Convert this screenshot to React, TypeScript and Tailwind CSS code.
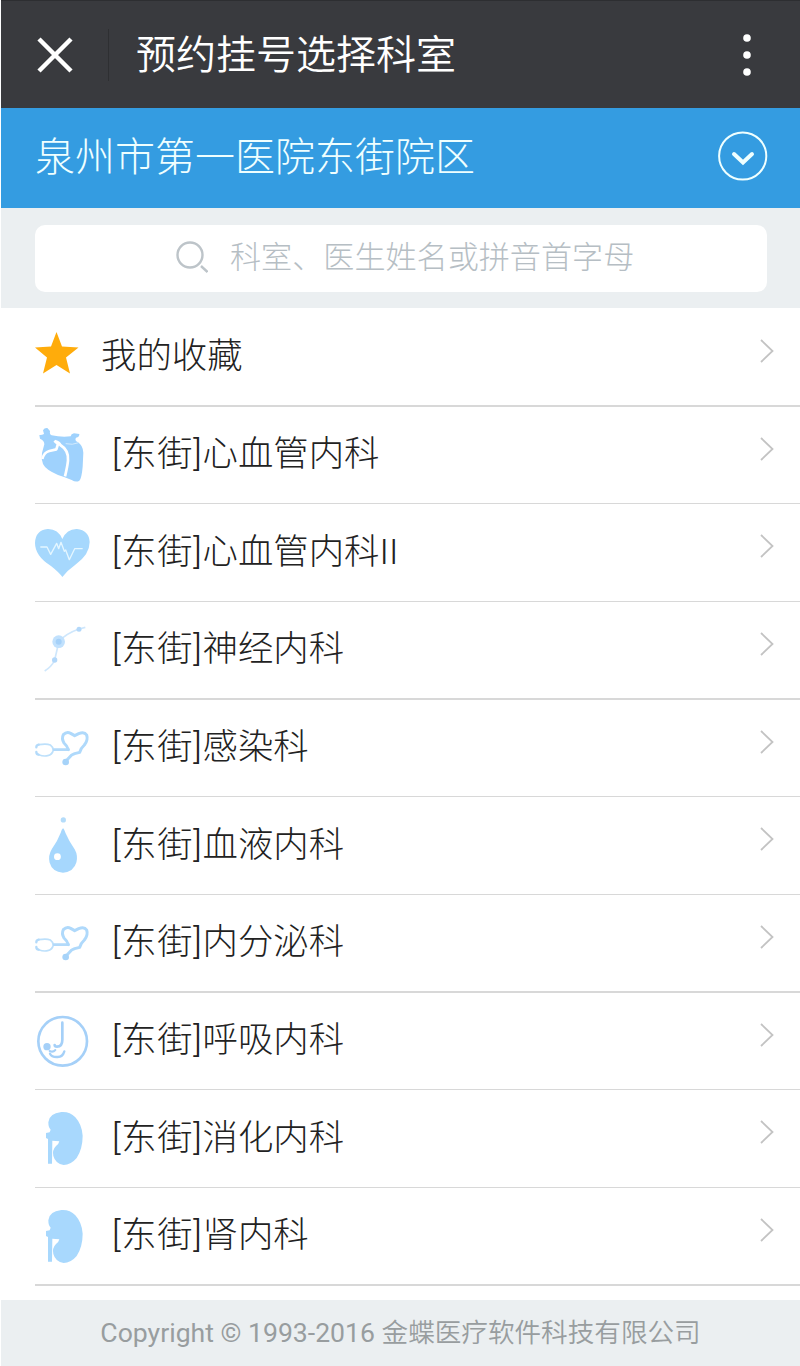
import React from "react";

function CardiacIcon() {
    return (
        <svg className="h-14 w-14" viewBox="30 36 168 168" fill="none">
            <path
                d="M43 60Q50 61 57 57L54 46Q58 38 67 39L75 48Q73 58 80 61Q108 67 137 64Q138 57 147 55L163 57Q164 66 153 68Q148 76 158 81Q174 91 175 113L173 155Q170 190 163 197Q153 203 140 195Q122 187 99 180Q62 164 54 147Q48 132 51 114L58 88Q58 76 45 71Z"
                fill="#9fd2fd"
            />
            <path
                d="M52 132Q57 112 73 108L94 103L99 87L88 77M91 79Q103 82 106 90Q132 106 129 137Q127 156 120 184"
                stroke="#fff"
                strokeWidth="8"
                strokeLinejoin="round"
            />
            <path d="M122 86Q142 91 161 83" stroke="#d3ebfe" strokeWidth="3" />
        </svg>
    );
}

function HeartRateIcon() {
    return (
        <svg className="h-14 w-14" viewBox="30 29 168 168" fill="none">
            <path
                d="M112 188Q102 174 78 155Q30 125 30 86Q31 48 68 44Q99 43 112 74Q126 43 156 44Q192 48 194 83Q194 121 151 151Q127 168 112 188Z"
                fill="#a6d8fd"
            />
            <path
                d="M46 98H66L77 120L95 87L101 103L108 84L118 111L122 107L133 136L149 103H173"
                stroke="#e4f6ff"
                strokeWidth="4"
                strokeLinejoin="round"
            />
        </svg>
    );
}

function NeuronIcon() {
    return (
        <svg className="h-14 w-14" viewBox="30 37 168 168" fill="none">
            <path
                d="M59 184Q80 171 89 151L98 112L101 96Q122 72 162 58L181 53"
                stroke="#cfe7fc"
                strokeWidth="5"
            />
            <circle cx="101" cy="96" r="19" fill="#c1e1fd" />
            <circle cx="101" cy="96" r="9" fill="#a5d1f9" />
            <circle cx="162" cy="59" r="7.5" fill="#b3d8fa" />
            <circle cx="89" cy="151" r="8" fill="#b3d8fa" />
        </svg>
    );
}

function StethoscopeIcon() {
    return (
        <svg
            className="h-14 w-14"
            viewBox="30 16 168 168"
            fill="none"
            strokeLinecap="round"
            strokeLinejoin="round"
        >
            <path
                d="M41 90Q65 86 76 91Q83 96 85 106Q82 120 68 123Q56 126 41 120"
                stroke="#bde0fb"
                strokeWidth="5"
            />
            <path d="M41 90Q34 91 34 98M34 112Q34 119 41 120" stroke="#b3dafa" strokeWidth="7" />
            <path d="M87 105H130" stroke="#b3dafa" strokeWidth="8" />
            <path
                d="M130 105Q127 94 117 85Q109 72 115 60Q125 50 137 56L149 63L161 57Q178 50 185 61Q190 76 178 91Q167 101 164 113L149 117L140 121L123 139"
                stroke="#afd9fb"
                strokeWidth="9"
            />
            <circle cx="122" cy="142" r="10" fill="#a6d3f9" />
        </svg>
    );
}

function BloodDropIcon() {
    return (
        <svg className="h-14 w-14" viewBox="30 37 168 171" fill="none">
            <circle cx="115" cy="46" r="8" fill="#b4dcfa" />
            <path
                d="M114 71Q118 73 122 87Q132 111 150 136Q160 154 155 175Q147 204 114 207Q81 205 73 176Q68 155 80 135Q98 109 107 85Q110 73 114 71Z"
                fill="#a6d7fd"
            />
            <circle cx="97" cy="158" r="10.5" fill="#fff" />
        </svg>
    );
}

function RespiratoryIcon() {
    return (
        <svg
            className="h-14 w-14"
            viewBox="30 38 168 168"
            fill="none"
            stroke="#a5d0f8"
            strokeLinecap="round"
        >
            <circle cx="113" cy="123" r="73" strokeWidth="8" />
            <path d="M112 67V118Q112 139 96 139Q89 139 89 134" strokeWidth="8" />
            <path d="M118 153Q113 170 98 170Q80 171 75 160" strokeWidth="7" />
            <path d="M91 149Q84 157 74 152" strokeWidth="6" />
            <circle cx="66" cy="139" r="11" fill="#a5d0f8" stroke="none" />
        </svg>
    );
}

function KidneyIcon() {
    return (
        <svg className="h-14 w-14" viewBox="30 46 168 168" fill="#a8d8fd">
            <path d="M109 52Q134 50 151 68Q171 90 173 123Q173 162 155 190Q137 211 116 211Q91 207 85 184Q81 166 93 154Q102 147 103 140L82 138L81 207H69V133L63 130V115L74 113L77 105Q70 99 70 83Q72 56 109 52Z" />
        </svg>
    );
}

function StarIcon() {
    return (
        <svg className="h-11 w-11" viewBox="0 0 44 44" fill="#ffac0b">
            <path d="M21.5 0L27 14.5L43.5 15.5L31 25.5L35 41.5L21.5 33L8 41.5L12 25.5L0 15.5L16 14.5Z" />
        </svg>
    );
}

function Chevron() {
    return (
        <svg
            className="mr-[26px] mb-[12px] ml-auto h-6 w-[14px]"
            viewBox="0 0 14 24"
            fill="none"
            stroke="#c3c3c3"
            strokeWidth="1.8"
        >
            <path d="M1 1L12.5 12L1 23" />
        </svg>
    );
}

const branch = "[东街]";

const departments = [
    { id: 1, name: "心血管内科", icon: CardiacIcon },
    { id: 2, name: "心血管内科II", icon: HeartRateIcon },
    { id: 3, name: "神经内科", icon: NeuronIcon },
    { id: 4, name: "感染科", icon: StethoscopeIcon },
    { id: 5, name: "血液内科", icon: BloodDropIcon },
    { id: 6, name: "内分泌科", icon: StethoscopeIcon },
    { id: 7, name: "呼吸内科", icon: RespiratoryIcon },
    { id: 8, name: "消化内科", icon: KidneyIcon },
    { id: 9, name: "肾内科", icon: KidneyIcon },
];

export default function App() {
    return (
        <div className="flex h-[1366px] w-[800px] flex-col overflow-hidden bg-white pl-px font-['Roboto','Noto_Sans_CJK_SC',sans-serif] font-light whitespace-nowrap">
            <header className="flex h-[108px] shrink-0 items-center border-t border-[#2d2e31] bg-[#393a3e] text-white">
                <button aria-label="关闭" className="ml-9">
                    <svg
                        className="h-9 w-9"
                        viewBox="0 0 36 36"
                        stroke="currentColor"
                        strokeWidth="4.5"
                    >
                        <path d="M2 2L34 34M34 2L2 34" />
                    </svg>
                </button>
                <div className="ml-[35px] h-[52px] w-px bg-[#2e2f32]" />
                <h1 className="mt-[2px] ml-[27px] font-['Roboto','Noto_Sans_CJK_SC_DemiLight','Noto_Sans_CJK_SC',sans-serif] text-[40px] leading-none font-normal">
                    预约挂号选择科室
                </h1>
                <button aria-label="更多" className="mr-[49px] ml-auto">
                    <svg className="h-[42px] w-2" viewBox="0 0 8 42" fill="currentColor">
                        <circle cx="4" cy="4" r="3.8" />
                        <circle cx="4" cy="21" r="3.8" />
                        <circle cx="4" cy="38" r="3.8" />
                    </svg>
                </button>
            </header>

            <div className="flex h-[100px] shrink-0 items-center bg-[#349ce1] pr-8 pl-[34px] text-[#efffff]">
                <h2 className="text-[40px] leading-none">泉州市第一医院东街院区</h2>
                <button aria-label="切换院区" className="mb-1 ml-auto">
                    <svg
                        className="h-[50px] w-[50px]"
                        viewBox="0 0 50 50"
                        fill="none"
                        stroke="currentColor"
                    >
                        <circle cx="24.7" cy="25" r="23.6" strokeWidth="2" />
                        <path
                            d="M16 23L25 31.5L34 23"
                            strokeWidth="4"
                            strokeLinecap="round"
                        />
                    </svg>
                </button>
            </div>

            <div className="h-[100px] shrink-0 bg-[#ebeff1] pt-[17px] pr-[33px] pl-[34px]">
                <div className="flex h-[67px] items-center rounded-[10px] bg-white pl-[141px] text-[#b6bec4]">
                    <svg
                        className="mb-[4px] h-8 w-8"
                        viewBox="0 0 32 32"
                        fill="none"
                        stroke="#bdc4c9"
                        strokeWidth="2.4"
                    >
                        <circle cx="14" cy="14" r="12.5" />
                        <path d="M25 25L31.5 31" />
                    </svg>
                    <span className="mb-[2px] ml-[22px] text-[31.1px] leading-none">
                        科室、医生姓名或拼音首字母
                    </span>
                </div>
            </div>

            <main className="h-[992px] shrink-0 pl-[34px] text-[35.4px] leading-none text-[#222]">
                <div className="flex h-[97.2px] items-center">
                    <div className="mb-[6px]">
                        <StarIcon />
                    </div>
                    <span className="ml-[22px]">我的收藏</span>
                    <Chevron />
                </div>
                <div className="h-[1.4px] bg-[#d8d8d8]" />
                {departments.map(({ id, name, icon: Icon }) => (
                    <React.Fragment key={id}>
                        <div className="flex h-[96.29px] items-center">
                            <Icon />
                            <span className="ml-[21px]">
                                <span className="tracking-[0.7px]">{branch}</span>
                                {name}
                            </span>
                            <Chevron />
                        </div>
                        <div className="h-[1.4px] bg-[#d8d8d8]" />
                    </React.Fragment>
                ))}
            </main>

            <footer className="flex h-[66px] shrink-0 items-center justify-center bg-[#ebeff1] font-['Roboto','Noto_Sans_CJK_SC_DemiLight','Noto_Sans_CJK_SC',sans-serif] text-[26.6px] leading-none font-normal text-[#989d9f]">
                Copyright © 1993-2016 金蝶医疗软件科技有限公司
            </footer>
        </div>
    );
}
